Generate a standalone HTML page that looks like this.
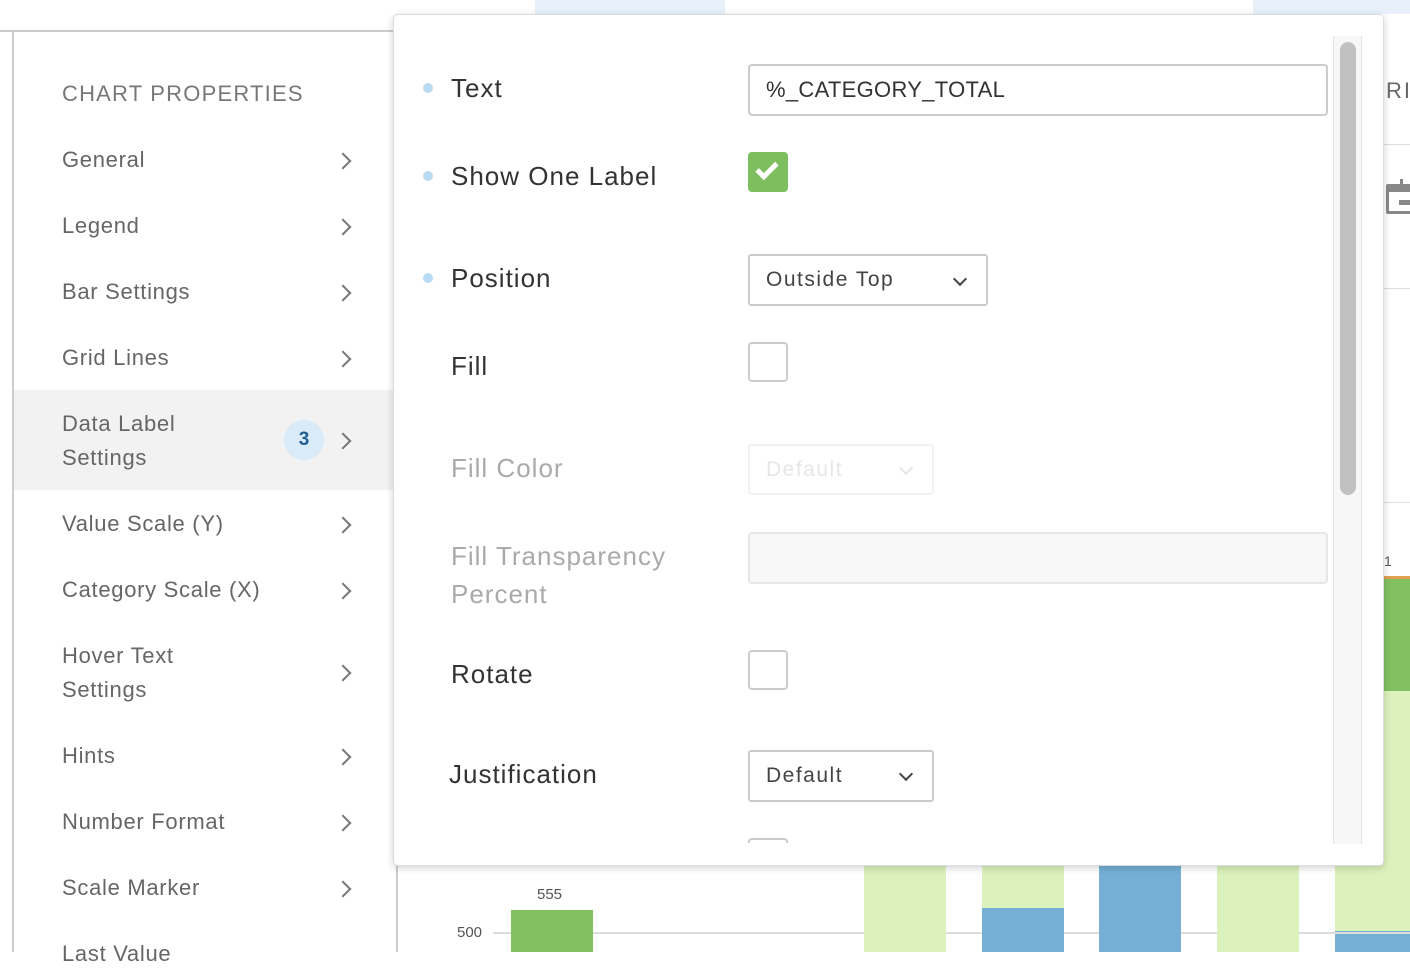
<!DOCTYPE html>
<html><head><style>
*{box-sizing:border-box;margin:0;padding:0}
body{width:1410px;height:952px;position:relative;overflow:hidden;background:#fff;font-family:"Liberation Sans",sans-serif}
.a{position:absolute}
.side{left:62px;font-size:22px;color:#666;line-height:34px;letter-spacing:0.7px}
.chev{position:absolute;left:337px;width:12px;height:12px;border-right:2.5px solid #777;border-top:2.5px solid #777;transform:rotate(45deg)}
.lab{left:451px;font-size:26px;color:#333;line-height:38px;letter-spacing:1px}
.dis{color:#aaa}
.dot{position:absolute;left:423px;width:10px;height:10px;border-radius:50%;background:#b9dbf3}
.box{position:absolute;border:2px solid #ccc;border-radius:4px;background:#fff}
.sel{position:absolute;border:2px solid #ccc;border-radius:3px;font-size:21px;letter-spacing:1.5px;color:#444;padding-left:16px;line-height:48px}
.dd{position:absolute;width:10px;height:10px;border-right:2.5px solid #444;border-bottom:2.5px solid #444;transform:rotate(45deg)}
</style></head><body>
<div class="a" style="left:535px;top:0;width:190px;height:14px;background:#e8f1fa"></div>
<div class="a" style="left:1253px;top:0;width:157px;height:14px;background:#e8f1fa"></div>
<div class="a" style="left:0;top:30px;width:400px;height:2px;background:#ccc"></div>
<div class="a" style="left:12px;top:31px;width:2px;height:921px;background:#ccc"></div>
<div class="a" style="left:62px;top:81px;font-size:22px;letter-spacing:1.2px;color:#777">CHART PROPERTIES</div>
<div class="a" style="left:14px;top:390px;width:380px;height:100px;background:#f2f2f2"></div>
<div class="a side" style="top:143px">General</div><div class="chev" style="top:155px"></div>
<div class="a side" style="top:209px">Legend</div><div class="chev" style="top:221px"></div>
<div class="a side" style="top:275px">Bar Settings</div><div class="chev" style="top:287px"></div>
<div class="a side" style="top:341px">Grid Lines</div><div class="chev" style="top:353px"></div>
<div class="a side" style="top:407px">Data Label<br>Settings</div><div class="chev" style="top:435px"></div>
<div class="a" style="left:284px;top:420px;width:40px;height:40px;border-radius:50%;background:#d9ebf8;color:#1f5f93;font-weight:bold;font-size:19px;text-align:center;line-height:40px">3</div>
<div class="a side" style="top:507px">Value Scale (Y)</div><div class="chev" style="top:519px"></div>
<div class="a side" style="top:573px">Category Scale (X)</div><div class="chev" style="top:585px"></div>
<div class="a side" style="top:639px">Hover Text<br>Settings</div><div class="chev" style="top:667px"></div>
<div class="a side" style="top:739px">Hints</div><div class="chev" style="top:751px"></div>
<div class="a side" style="top:805px">Number Format</div><div class="chev" style="top:817px"></div>
<div class="a side" style="top:871px">Scale Marker</div><div class="chev" style="top:883px"></div>
<div class="a side" style="top:937px">Last Value</div>
<!-- right background -->
<div class="a" style="left:1383px;top:144px;width:27px;height:1px;background:#ddd"></div>
<div class="a" style="left:1383px;top:288px;width:27px;height:1px;background:#ddd"></div>
<div class="a" style="left:1383px;top:502px;width:27px;height:1px;background:#ddd"></div>
<div class="a" style="left:1386px;top:78px;font-size:22px;color:#666;letter-spacing:2px">RI</div>
<div class="a" style="left:1386px;top:184px;width:30px;height:30px;border:3px solid #888;border-top-width:8px;border-radius:2px"></div>
<div class="a" style="left:1400px;top:179px;width:3px;height:6px;background:#888"></div>
<div class="a" style="left:1399px;top:200px;width:11px;height:5px;background:#888"></div>
<div class="a" style="left:1384px;top:553px;font-size:14px;color:#555">1</div>
<div class="a" style="left:1383px;top:576px;width:27px;height:3px;background:#e0a050"></div>
<div class="a" style="left:1383px;top:579px;width:27px;height:112px;background:#82c062"></div>
<div class="a" style="left:1383px;top:691px;width:27px;height:240px;background:#dcf2bd"></div>
<div class="a" style="left:1335px;top:931px;width:75px;height:21px;background:#75afd5"></div>
<!-- chart -->
<div class="a" style="left:396px;top:865px;width:2px;height:87px;background:#ccc"></div>
<div class="a" style="left:493px;top:932px;width:917px;height:2px;background:#ddd"></div>
<div class="a" style="left:457px;top:924px;font-size:15px;color:#555">500</div>
<div class="a" style="left:537px;top:886px;font-size:15px;color:#555">555</div>
<div class="a" style="left:511px;top:910px;width:82px;height:42px;background:#82c062"></div>
<div class="a" style="left:864px;top:865px;width:82px;height:87px;background:#dcf2bd"></div>
<div class="a" style="left:982px;top:865px;width:82px;height:43px;background:#dcf2bd"></div>
<div class="a" style="left:982px;top:908px;width:82px;height:44px;background:#75afd5"></div>
<div class="a" style="left:1099px;top:865px;width:82px;height:87px;background:#75afd5"></div>
<div class="a" style="left:1217px;top:865px;width:82px;height:87px;background:#dcf2bd"></div>
<div class="a" style="left:1335px;top:865px;width:48px;height:66px;background:#dcf2bd"></div>
<!-- popup -->
<div class="a" style="left:393px;top:14px;width:991px;height:852px;background:#fff;border:1px solid #ddd;border-radius:5px;box-shadow:0 2px 8px rgba(0,0,0,.18);overflow:hidden">
<div class="a" style="left:939px;top:21px;width:29px;height:808px;background:#f7f7f7;border-left:1px solid #e3e3e3;border-right:1px solid #e3e3e3"></div>
<div class="a" style="left:946px;top:27px;width:16px;height:453px;background:#c1c1c1;border-radius:8px"></div>
</div>
<div class="dot" style="top:83px"></div><div class="a lab" style="top:69px">Text</div>
<div class="a" style="left:748px;top:64px;width:580px;height:52px;border:2px solid #ccc;border-radius:4px;font-size:22px;color:#333;padding-left:16px;line-height:48px;letter-spacing:0.3px">%_CATEGORY_TOTAL</div>
<div class="dot" style="top:171px"></div><div class="a lab" style="top:157px">Show One Label</div>
<div class="a" style="left:748px;top:152px;width:40px;height:40px;background:#7dbf5e;border-radius:4px"><div class="a" style="left:13px;top:6px;width:12px;height:21px;border-right:5px solid #fff;border-bottom:5px solid #fff;transform:rotate(45deg)"></div></div>
<div class="dot" style="top:273px"></div><div class="a lab" style="top:259px">Position</div>
<div class="sel" style="left:748px;top:254px;width:240px;height:52px">Outside Top</div><div class="dd" style="left:955px;top:274px"></div>
<div class="a lab" style="top:347px">Fill</div>
<div class="box" style="left:748px;top:342px;width:40px;height:40px"></div>
<div class="a lab dis" style="top:449px">Fill Color</div>
<div class="sel" style="left:748px;top:444px;width:186px;height:51px;border-color:#f2f2f2;color:#e6e6e6">Default</div><div class="dd" style="left:901px;top:463px;border-color:#e6e6e6"></div>
<div class="a lab dis" style="top:537px">Fill Transparency<br>Percent</div>
<div class="a" style="left:748px;top:532px;width:580px;height:52px;border:2px solid #e6e6e6;border-radius:4px;background:#f8f8f8"></div>
<div class="a lab" style="top:655px">Rotate</div>
<div class="box" style="left:748px;top:650px;width:40px;height:40px"></div>
<div class="a lab" style="left:449px;top:755px">Justification</div>
<div class="sel" style="left:748px;top:750px;width:186px;height:52px">Default</div><div class="dd" style="left:901px;top:769px"></div>
<div class="a" style="left:748px;top:838px;width:40px;height:5px;overflow:hidden"><div class="box" style="left:0;top:0;width:40px;height:40px"></div></div>
</body></html>
